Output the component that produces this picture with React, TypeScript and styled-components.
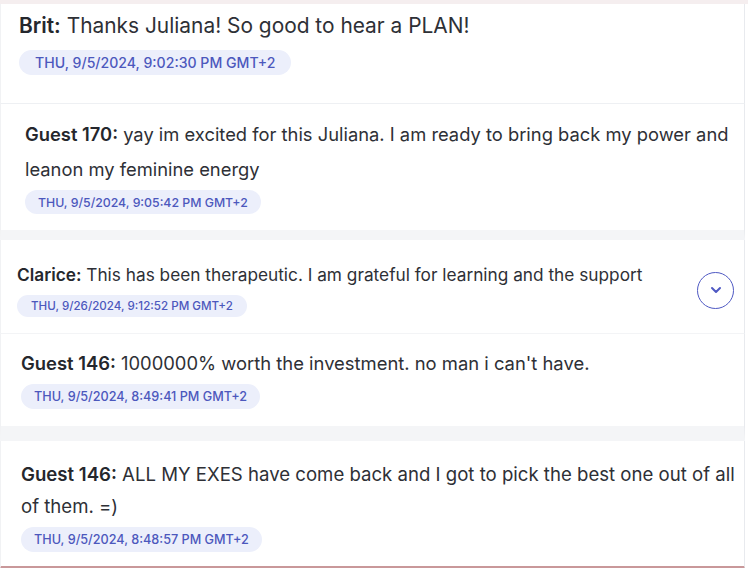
import React from 'react';
import styled, { createGlobalStyle } from 'styled-components';

const GlobalStyle = createGlobalStyle`
  html, body {
    margin: 0;
    padding: 0;
    background: #ffffff;
  }
  body {
    font-family: Inter, "Open Sans", sans-serif;
    color: #2c2e35;
    overflow: hidden;
  }
`;

const Page = styled.div`
  width: 748px;
  height: 568px;
  display: flex;
  flex-direction: column;
  background: #ffffff;
  border-top: 4px solid #f5eeef;
  box-sizing: border-box;
  overflow: hidden;
`;

type ShotProps = {
  $pad: string;
  $band: number;
  $bandColor?: string;
};

const Shot = styled.section<ShotProps>`
  display: flex;
  align-items: center;
  justify-content: space-between;
  width: 745px;
  box-sizing: border-box;
  padding: ${(p) => p.$pad};
  background: #ffffff;
  border-left: 1px solid #f1f2f4;
  border-right: 1px solid #e8eaee;
  border-bottom: ${(p) => p.$band}px solid ${(p) => p.$bandColor || '#f4f5f7'};
`;

const Message = styled.div`
  display: flex;
  flex-direction: column;
  align-items: flex-start;
`;

type TextProps = {
  $size: number;
  $line: number;
  $width?: number;
};

const Text = styled.p<TextProps>`
  margin: 0;
  font-size: ${(p) => p.$size}px;
  line-height: ${(p) => p.$line}px;
  width: ${(p) => (p.$width ? `${p.$width}px` : 'auto')};
  color: #2e3036;
`;

const Name = styled.span`
  font-weight: 600;
  color: #25272d;
`;

type PillProps = {
  $size: number;
  $height: number;
  $padX: number;
  $gap: number;
};

const Pill = styled.span<PillProps>`
  display: inline-flex;
  align-items: center;
  height: ${(p) => p.$height}px;
  margin-top: ${(p) => p.$gap}px;
  padding: 0 ${(p) => p.$padX}px;
  border-radius: ${(p) => p.$height / 2}px;
  background: #eceffb;
  color: #4c58bd;
  font-size: ${(p) => p.$size}px;
  font-weight: 500;
  text-transform: uppercase;
  white-space: nowrap;
`;

const ScrollButton = styled.button`
  display: flex;
  align-items: center;
  justify-content: center;
  width: 37px;
  height: 37px;
  padding: 0;
  margin-right: 10px;
  border: 1.4px solid #4f59c3;
  border-radius: 50%;
  background: #ffffff;
  color: #4f59c3;
  cursor: pointer;
`;

const ChevronDown = () => (
  <svg width="12" height="8" viewBox="0 0 12 8" fill="none">
    <path d="M2 2l4 4 4-4" stroke="currentColor" strokeWidth="2" strokeLinecap="round" strokeLinejoin="round" />
  </svg>
);

const App: React.FC = () => {
  return (
    <>
      <GlobalStyle />
      <Page>
        <Shot $pad="8px 0 28px 18px" $band={1} $bandColor="#eef0f3">
          <Message>
            <Text $size={20.9} $line={28}>
              <Name>Brit:</Name> Thanks Juliana! So good to hear a PLAN!
            </Text>
            <Pill $size={14.1} $height={25} $padX={16} $gap={10}>
              Thu, 9/5/2024, 9:02:30 PM GMT+2
            </Pill>
          </Message>
        </Shot>

        <Shot $pad="13px 0 16px 24px" $band={10}>
          <Message>
            <Text $size={18.35} $line={35} $width={716}>
              <Name>Guest 170:</Name> yay im excited for this Juliana. I am ready to bring back my power and leanon my feminine energy
            </Text>
            <Pill $size={12.3} $height={24} $padX={13} $gap={3}>
              Thu, 9/5/2024, 9:05:42 PM GMT+2
            </Pill>
          </Message>
        </Shot>

        <Shot $pad="23px 0 16px 16px" $band={1} $bandColor="#f3f4f6">
          <Message>
            <Text $size={17.25} $line={24}>
              <Name>Clarice:</Name> This has been therapeutic. I am grateful for learning and the support
            </Text>
            <Pill $size={11.6} $height={22} $padX={14} $gap={8}>
              Thu, 9/26/2024, 9:12:52 PM GMT+2
            </Pill>
          </Message>
          <ScrollButton aria-label="Scroll down">
            <ChevronDown />
          </ScrollButton>
        </Shot>

        <Shot $pad="16px 0 17px 20px" $band={15}>
          <Message>
            <Text $size={18.4} $line={26}>
              <Name>Guest 146:</Name> 1000000% worth the investment. no man i can't have.
            </Text>
            <Pill $size={12.65} $height={25} $padX={13} $gap={8}>
              Thu, 9/5/2024, 8:49:41 PM GMT+2
            </Pill>
          </Message>
        </Shot>

        <Shot $pad="17px 0 14px 20px" $band={3} $bandColor="#c9989a">
          <Message>
            <Text $size={18.6} $line={32} $width={724}>
              <Name>Guest 146:</Name> ALL MY EXES have come back and I got to pick the best one out of all of them. =)
            </Text>
            <Pill $size={12.65} $height={25} $padX={13} $gap={5}>
              Thu, 9/5/2024, 8:48:57 PM GMT+2
            </Pill>
          </Message>
        </Shot>
      </Page>
    </>
  );
};

export default App;
